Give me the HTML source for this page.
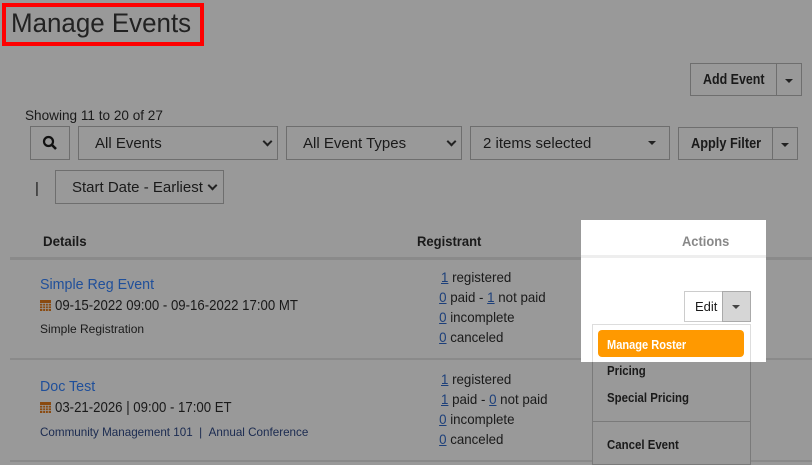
<!DOCTYPE html>
<html><head><meta charset="utf-8"><style>
*{box-sizing:border-box;margin:0;padding:0}
body{width:812px;height:465px;background:#999;font-family:"Liberation Sans",sans-serif;position:relative;overflow:hidden;color:#1a1a1a}
.a{position:absolute;white-space:nowrap}
.box{position:absolute;border:1px solid #6e6e6e;}
.n{transform-origin:left top}
a{color:#1c3f7a;text-decoration:underline}
.caret{width:0;height:0;border-left:4px solid transparent;border-right:4px solid transparent;border-top:4px solid #222;position:absolute}
.chev{position:absolute;width:7px;height:7px;border-right:2px solid #222;border-bottom:2px solid #222;transform:rotate(45deg)}
.hr{position:absolute;left:10px;right:0;height:2px;background:#8a8a8a}
</style></head><body>
<div class="a" style="left:2px;top:3px;width:202px;height:43px;border:4px solid #f00"></div>
<div class="a n" style="left:11px;top:8px;font-size:27px;color:#222;transform:scaleX(.96)">Manage Events</div>

<div class="box" style="left:690px;top:63px;width:112px;height:33px"></div>
<div class="a" style="left:776px;top:63px;width:1px;height:33px;background:#6e6e6e"></div>
<div class="a n" style="left:703px;top:71px;font-size:15px;font-weight:bold;transform:scaleX(.83)">Add Event</div>
<div class="caret" style="left:785px;top:79px"></div>

<div class="a n" style="left:25px;top:107px;font-size:14px;transform:scaleX(.97)">Showing 11 to 20 of 27</div>
<div class="box" style="left:30px;top:126px;width:40px;height:34px"></div>
<svg class="a" style="left:42px;top:135px" width="16" height="16" viewBox="0 0 16 16"><circle cx="6.5" cy="6.5" r="4.5" fill="none" stroke="#111" stroke-width="2.2"/><path d="M10 10l4 4" stroke="#111" stroke-width="2.6"/></svg>
<div class="box" style="left:78px;top:126px;width:200px;height:34px"></div>
<div class="a" style="left:95px;top:135px;font-size:15px">All Events</div>
<div class="chev" style="left:264px;top:138px"></div>
<div class="box" style="left:286px;top:126px;width:176px;height:34px"></div>
<div class="a" style="left:303px;top:135px;font-size:15px">All Event Types</div>
<div class="chev" style="left:448px;top:138px"></div>
<div class="box" style="left:470px;top:126px;width:200px;height:34px"></div>
<div class="a" style="left:483px;top:135px;font-size:15px">2 items selected</div>
<div class="caret" style="left:648px;top:141px"></div>
<div class="box" style="left:678px;top:127px;width:120px;height:33px"></div>
<div class="a" style="left:772px;top:127px;width:1px;height:33px;background:#6e6e6e"></div>
<div class="a n" style="left:691px;top:135px;font-size:15px;font-weight:bold;transform:scaleX(.85)">Apply Filter</div>
<div class="caret" style="left:781px;top:143px"></div>

<div class="a" style="left:35px;top:180px;font-size:15px">|</div>
<div class="box" style="left:55px;top:170px;width:169px;height:34px"></div>
<div class="a" style="left:72px;top:179px;font-size:15px">Start Date - Earliest</div>
<div class="chev" style="left:209px;top:182px"></div>

<div class="a n" style="left:43px;top:233px;font-size:14px;font-weight:bold;transform:scaleX(.95)">Details</div>
<div class="a n" style="left:417px;top:233px;font-size:14px;font-weight:bold;transform:scaleX(.93)">Registrant</div>
<div class="hr" style="top:257px;height:3px"></div>

<div class="a n" style="left:40px;top:276px;font-size:15px;color:#1f4f9a;transform:scaleX(.95)">Simple Reg Event</div>
<svg class="a" style="left:40px;top:299px" width="11" height="12" viewBox="0 0 11 12"><rect x="0" y="1" width="11" height="11" fill="#8a4a10"/><g stroke="#999" stroke-width="0.8"><path d="M0 4.5h11M0 7h11M0 9.5h11M2.75 4v8M5.5 4v8M8.25 4v8"/></g></svg>
<div class="a n" style="left:55px;top:297px;font-size:15px;transform:scaleX(.88)">09-15-2022 09:00 - 09-16-2022 17:00 MT</div>
<div class="a n" style="left:40px;top:322px;font-size:12px">Simple Registration</div>
<div class="a n" style="left:441px;top:267px;font-size:14px;line-height:20px;transform:scaleX(.95)"><a>1</a> registered<br><span style="margin-left:-2px"><a>0</a> paid - <a>1</a> not paid</span><br><span style="margin-left:-2px"><a>0</a> incomplete</span><br><span style="margin-left:-2px"><a>0</a> canceled</span></div>
<div class="hr" style="top:358px"></div>

<div class="a n" style="left:40px;top:378px;font-size:15px;color:#1f4f9a;transform:scaleX(.95)">Doc Test</div>
<svg class="a" style="left:40px;top:401px" width="11" height="12" viewBox="0 0 11 12"><rect x="0" y="1" width="11" height="11" fill="#8a4a10"/><g stroke="#999" stroke-width="0.8"><path d="M0 4.5h11M0 7h11M0 9.5h11M2.75 4v8M5.5 4v8M8.25 4v8"/></g></svg>
<div class="a n" style="left:55px;top:399px;font-size:15px;transform:scaleX(.88)">03-21-2026 | 09:00 - 17:00 ET</div>
<div class="a n" style="left:40px;top:425px;font-size:12px;color:#1a2a50;transform:scaleX(.97)">Community Management 101 &nbsp;| &nbsp;Annual Conference</div>
<div class="a n" style="left:441px;top:369px;font-size:14px;line-height:20px;transform:scaleX(.95)"><a>1</a> registered<br><a>1</a> paid - <a>0</a> not paid<br><span style="margin-left:-2px"><a>0</a> incomplete</span><br><span style="margin-left:-2px"><a>0</a> canceled</span></div>
<div class="hr" style="top:460px"></div>

<div class="a" style="left:592px;top:324px;width:159px;height:141px;border:1px solid #7a7a7a;background:#999"></div>
<div class="a n" style="left:607px;top:363px;font-size:13px;font-weight:bold;transform:scaleX(.88)">Pricing</div>
<div class="a n" style="left:607px;top:390px;font-size:13px;font-weight:bold;transform:scaleX(.88)">Special Pricing</div>
<div class="a" style="left:593px;top:421px;width:157px;height:1px;background:#7a7a7a"></div>
<div class="a n" style="left:607px;top:437px;font-size:13px;font-weight:bold;transform:scaleX(.88)">Cancel Event</div>

<div class="a" style="left:581px;top:220px;width:185px;height:142px;background:#fff"></div>
<div class="a" style="left:581px;top:255px;width:185px;height:3px;background:#eee"></div>
<div class="a n" style="left:682px;top:233px;font-size:14px;font-weight:bold;color:#888;transform:scaleX(.92)">Actions</div>
<div class="a" style="left:684px;top:291px;width:67px;height:31px;border:1px solid #ccc;background:#fff"></div>
<div class="a" style="left:722px;top:291px;width:29px;height:31px;border:1px solid #aaa;background:#d6d6d6"></div>
<div class="a" style="left:695px;top:299px;font-size:13px">Edit</div>
<div class="caret" style="left:732px;top:305px;border-top-color:#444"></div>
<div class="a" style="left:592px;top:324px;width:159px;height:38px;border:1px solid #ddd;border-bottom:none"></div>
<div class="a" style="left:598px;top:330px;width:146px;height:27px;background:#f90;border-radius:4px"></div>
<div class="a n" style="left:607px;top:337px;color:#fff;font-size:13px;font-weight:bold;transform:scaleX(.85)">Manage Roster</div>
</body></html>
